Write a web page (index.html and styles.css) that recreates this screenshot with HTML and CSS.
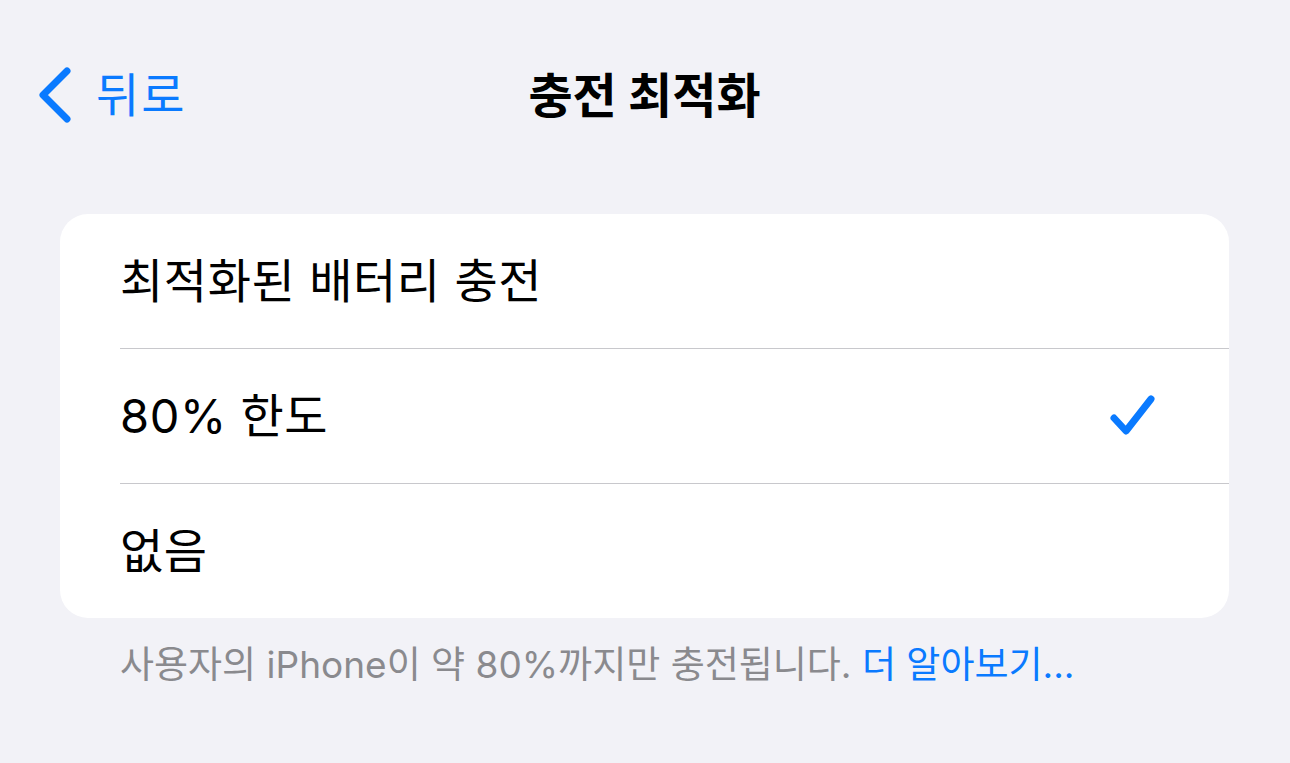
FILE: index.html
```html
<!DOCTYPE html>
<html lang="ko">
<head>
<meta charset="utf-8">
<link rel="stylesheet" href="styles.css">
</head>
<body>
<div class="screen">
  <header class="nav">
    <a class="back">
      <svg class="chev" width="34" height="56" viewBox="0 0 34 56"><path d="M29 4 L5 28 L29 52" fill="none" stroke="#0a7aff" stroke-width="7" stroke-linecap="round" stroke-linejoin="round"/></svg>
      <span class="back-label">뒤로</span>
    </a>
    <h1 class="title">충전 최적화</h1>
  </header>
  <section class="card">
    <div class="row"><span class="label">최적화된 배터리 충전</span></div>
    <div class="row"><span class="label">80% 한도</span>
      <svg class="check" width="48" height="46" viewBox="0 0 48 46"><path d="M5 25 L17 38 L42 6" fill="none" stroke="#0a7aff" stroke-width="7" stroke-linecap="round" stroke-linejoin="round"/></svg>
    </div>
    <div class="row"><span class="label">없음</span></div>
  </section>
  <p class="footer">사용자의 iPhone이 약 80%까지만 충전됩니다. <span class="link">더 알아보기...</span></p>
</div>
</body>
</html>
```
FILE: styles.css
```css
html, body { margin: 0; padding: 0; }
body {
  background: #f2f2f7;
  font-family: "Inter", "Noto Sans CJK KR", "Noto Sans", sans-serif;
  color: #000;
  width: 1290px;
  height: 763px;
  overflow: hidden;
}
.screen { padding: 0 61px 0 60px; }
.nav {
  position: relative;
  height: 190px;
  display: flex;
  align-items: flex-start;
  justify-content: center;
}
.back {
  position: absolute;
  left: -22px;
  top: 67px;
  display: flex;
  align-items: center;
  gap: 24px;
  color: #0a7aff;
}
.back-label { font-size: 47px; line-height: 56px; letter-spacing: 2px; }
.title {
  margin: 68px 0 0;
  font-size: 48px;
  font-weight: 700;
  line-height: 56px;
}
.card {
  margin-top: 24px;
  background: #fff;
  border-radius: 28px;
  overflow: hidden;
}
.row {
  height: 134px;
  margin-left: 60px;
  padding-right: 72px;
  display: flex;
  align-items: center;
  justify-content: space-between;
  border-bottom: 1px solid #c8c8cc;
}
.row:last-child { border-bottom: none; }
.label { font-size: 47px; line-height: 56px; letter-spacing: 0.6px; }
.footer {
  margin: 21px 0 0 60px;
  font-size: 37px;
  color: #8a8a8e;
  line-height: 52px;
}
.link { color: #0a7aff; }
```
